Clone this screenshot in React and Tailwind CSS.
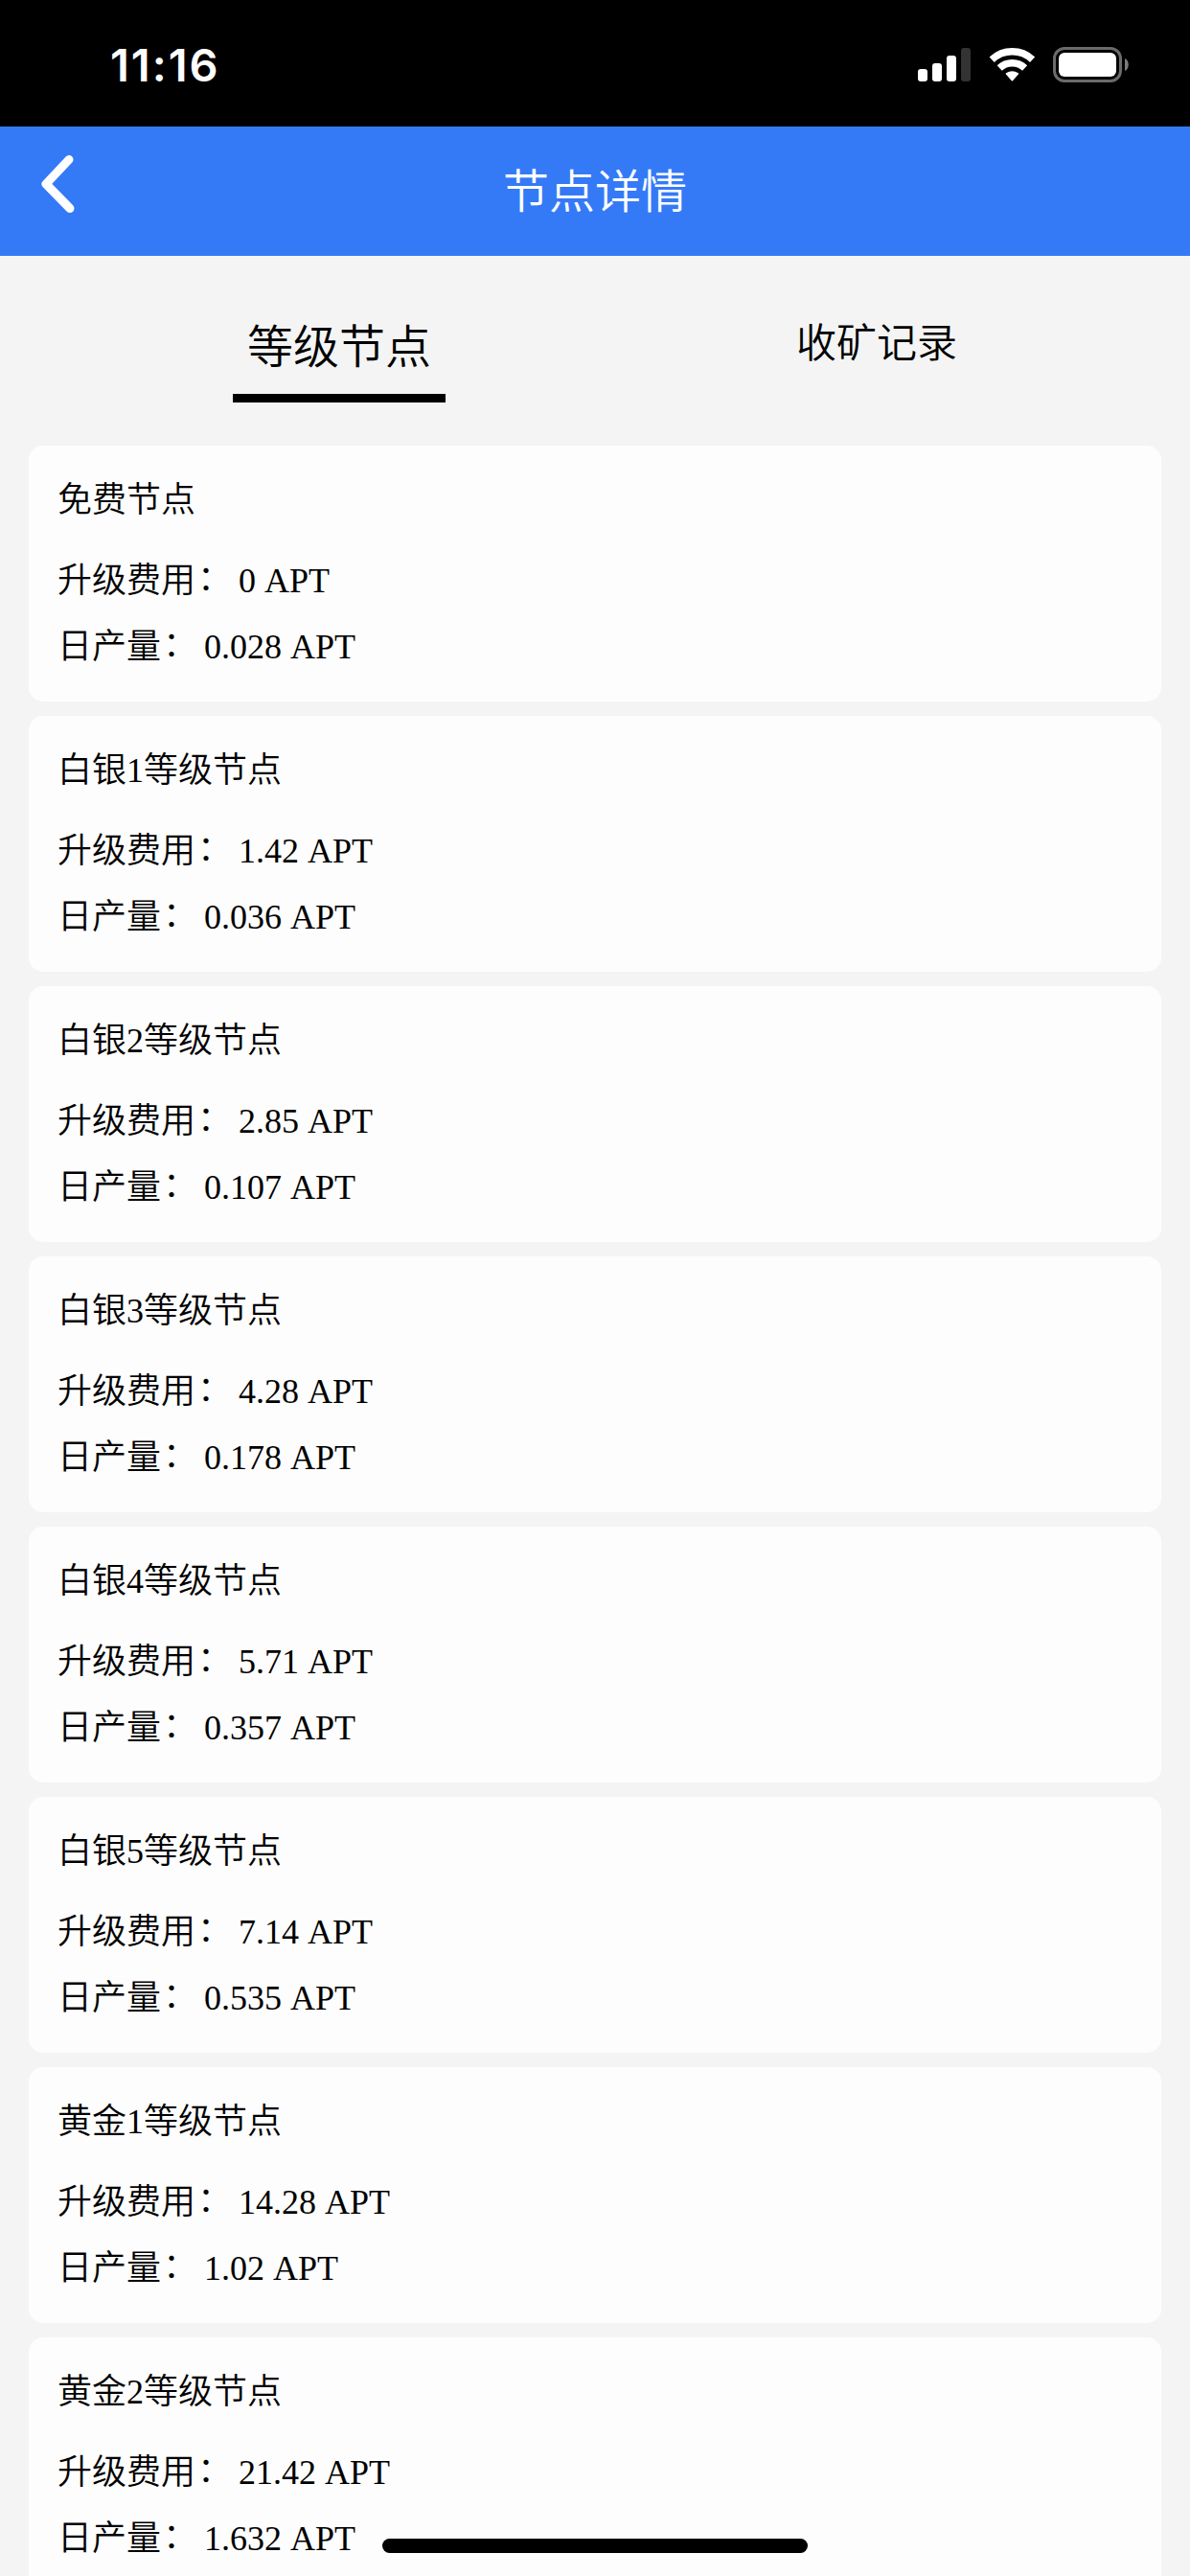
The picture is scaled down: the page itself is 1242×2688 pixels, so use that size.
// src/pages/NodeDetail.jsx
import { useState } from "react";

const nodes = [
  { name: "免费节点", cost: "0", output: "0.028" },
  { name: "白银1等级节点", cost: "1.42", output: "0.036" },
  { name: "白银2等级节点", cost: "2.85", output: "0.107" },
  { name: "白银3等级节点", cost: "4.28", output: "0.178" },
  { name: "白银4等级节点", cost: "5.71", output: "0.357" },
  { name: "白银5等级节点", cost: "7.14", output: "0.535" },
  { name: "黄金1等级节点", cost: "14.28", output: "1.02" },
  { name: "黄金2等级节点", cost: "21.42", output: "1.632" },
];

const StatusBar = () => (
  <div className="flex h-[132px] shrink-0 items-start justify-between bg-black pl-[115px] pr-[63px] text-white">
    <span className="mt-[32px] font-['Inter',sans-serif] text-[47px] font-semibold leading-[72px] tracking-[2px]">
      11:16
    </span>
    <div className="mt-[48px] flex items-start">
      <svg width="56" height="38" viewBox="0 0 56 38" fill="#fff">
        <rect x="0" y="24" width="10" height="13" rx="3" />
        <rect x="15" y="18" width="10" height="19" rx="3" />
        <rect x="30" y="10" width="10" height="27" rx="3" />
        <rect x="45" y="2" width="10" height="35" rx="3" fill="#333" />
      </svg>
      <svg className="ml-[18px]" width="50" height="38" viewBox="0 0 50 38" fill="none">
        <path d="M3.2 14.2A31 31 0 0 1 45.6 14.2" stroke="#fff" strokeWidth="7.6" />
        <path d="M11.2 23A19.2 19.2 0 0 1 37.6 23" stroke="#fff" strokeWidth="7.4" />
        <path d="M17.9 29.6Q17.2 28.9 18 28.3A11.5 11.5 0 0 1 30.8 28.3Q31.6 28.9 30.9 29.6L25 36.2Q24.4 36.8 23.8 36.2Z" fill="#fff" />
      </svg>
      <svg className="ml-[17px]" width="80" height="38" viewBox="0 0 80 38">
        <rect x="1.5" y="2.5" width="69" height="34" rx="10.5" fill="none" stroke="#6b6b6b" strokeWidth="3" />
        <rect x="6" y="7" width="60" height="25" rx="6" fill="#fff" />
        <path d="M75 13C80 15 80 24 75 26Z" fill="#7c7c7c" />
      </svg>
    </div>
  </div>
);

const Header = () => (
  <header className="flex h-[135px] shrink-0 items-center bg-[#347af6] text-white">
    <button className="flex w-[120px] pb-[15px] pl-[42px]" aria-label="返回">
      <svg width="38" height="62" viewBox="0 0 38 62" fill="none">
        <path d="M30 5.5L6 31L31 56.5" stroke="#fff" strokeWidth="9" strokeLinecap="round" strokeLinejoin="round" />
      </svg>
    </button>
    <h1 className="flex-1 pt-px text-center text-[48px] font-[350] leading-[67px]">节点详情</h1>
    <div className="w-[120px]" />
  </header>
);

const Row = ({ label, value }) => (
  <p className="leading-[69px]">
    {label}
    <span className="relative -top-[2px] left-[2px]">：</span> {value} APT
  </p>
);

const NodeCard = ({ node }) => (
  <li className="h-[267px] shrink-0 rounded-[15px] bg-[#fdfdfd] px-[30px] pt-[23px] text-[36px]">
    <h2 className="mb-[15px] font-[350] leading-[69px]">{node.name}</h2>
    <Row label="升级费用" value={node.cost} />
    <Row label="日产量" value={node.output} />
  </li>
);

const App = () => {
  const [tab, setTab] = useState("nodes");

  return (
    <div className="relative flex h-[2688px] w-[1242px] flex-col overflow-hidden bg-[#f4f4f4] font-['Liberation_Serif','Noto_Sans_CJK_SC',serif] font-[350] text-black" lang="zh-CN">
      <StatusBar />
      <Header />

      {/* Tabs */}
      <nav className="flex h-[198px] shrink-0 items-start pl-[243px] pt-[60px]">
        <button
          onClick={() => setTab("nodes")}
          className={`flex h-[93px] w-[222px] justify-center border-b-[9px] pt-[2px] leading-[67px] ${tab === "nodes" ? "border-black text-[48px]" : "border-transparent text-[42px]"}`}
        >
          等级节点
        </button>
        <button
          onClick={() => setTab("records")}
          className={`ml-[339px] flex h-[93px] w-[222px] justify-center border-b-[9px] pt-[2px] leading-[60px] ${tab === "records" ? "border-black text-[48px]" : "border-transparent text-[42px]"}`}
        >
          收矿记录
        </button>
      </nav>

      {/* Node list */}
      <ul className="flex flex-col gap-[15px] px-[30px]">
        {nodes.map((node) => (
          <NodeCard key={node.name} node={node} />
        ))}
      </ul>

      {/* Home indicator */}
      <div className="absolute bottom-[24px] left-[399px] h-[15px] w-[444px] rounded-full bg-black" />
    </div>
  );
};

export default App;
